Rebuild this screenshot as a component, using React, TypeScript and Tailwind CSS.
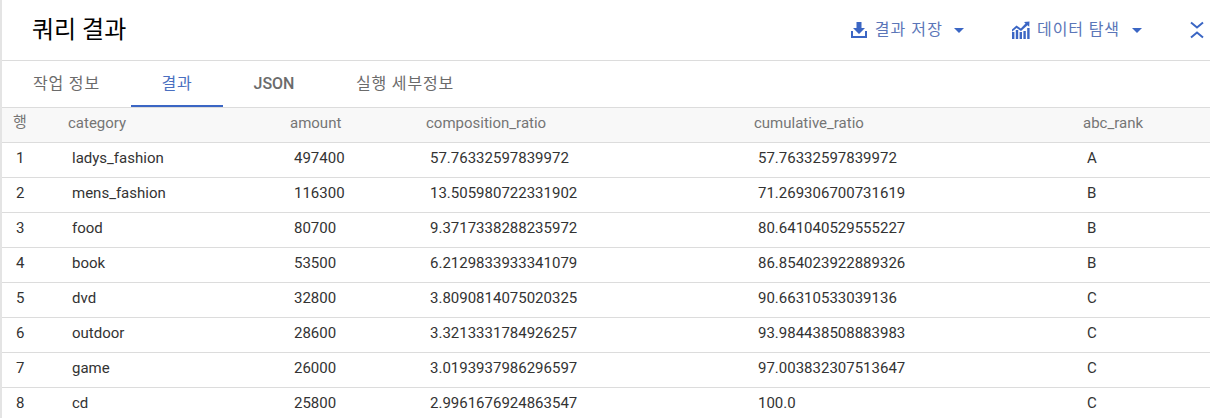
const rows = [
  ["1", "ladys_fashion", "497400", "57.76332597839972", "57.76332597839972", "A"],
  ["2", "mens_fashion", "116300", "13.505980722331902", "71.269306700731619", "B"],
  ["3", "food", "80700", "9.3717338288235972", "80.641040529555227", "B"],
  ["4", "book", "53500", "6.2129833933341079", "86.854023922889326", "B"],
  ["5", "dvd", "32800", "3.8090814075020325", "90.66310533039136", "C"],
  ["6", "outdoor", "28600", "3.3213331784926257", "93.984438508883983", "C"],
  ["7", "game", "26000", "3.0193937986296597", "97.003832307513647", "C"],
  ["8", "cd", "25800", "2.9961676924863547", "100.0", "C"],
];

const gridCols = "grid grid-cols-[66px_222px_136px_328px_329px_1fr]";
const font = "font-['Roboto','Noto_Sans_CJK_KR',sans-serif]";

function SaveIcon() {
  return (
    <svg width="16" height="16" viewBox="0 0 16 16" fill="#3b66c4">
      <path d="M5.5 0h5v6h3.5L8 12 2 6h3.5z" />
      <path d="M0 9h2v5h12V9h2v7H0z" />
    </svg>
  );
}

function ExploreIcon() {
  return (
    <svg width="18" height="18" viewBox="0 0 18 18" fill="#3b66c4">
      <rect x="0" y="11" width="2.4" height="7" />
      <rect x="3.8" y="9" width="2.4" height="9" />
      <rect x="7.6" y="11" width="2.4" height="7" />
      <rect x="11.4" y="10" width="2.4" height="8" />
      <rect x="15.2" y="7" width="2.4" height="11" />
      <path d="M0 8.5 4.5 4.5 8.8 7.5 13.5 2.5 12 1 17.5 0.5 17.2 5.8 15.5 4.2 9 10 4.6 6.9 0 10.8Z" />
    </svg>
  );
}

function CollapseIcon() {
  return (
    <svg width="14" height="18" viewBox="0 0 14 18" fill="none" stroke="#3b66c4" strokeWidth="2">
      <path d="M1 1.5 7 6.5 13 1.5" />
      <path d="M1 16.5 7 11.5 13 16.5" />
    </svg>
  );
}

function Caret() {
  return <span className="h-0 w-0 border-x-[5.5px] border-t-[5px] border-x-transparent border-t-[#3b66c4]" />;
}

export default function App() {
  return (
    <div className={`h-[418px] w-[1210px] overflow-hidden border-l-2 border-[#e4e4e4] bg-white ${font}`}>
      <div className="flex h-[61px] items-center border-b border-[#dcdcdc] pr-[6px] pl-[30px]">
        <h1 className="text-[24px] leading-none text-black">쿼리 결과</h1>
        <button className="ml-auto flex items-center text-[16px] tracking-[1.1px] text-[#5b76b8]">
          <span className="mr-[8px] flex"><SaveIcon /></span>
          결과 저장
          <span className="ml-[11px] flex"><Caret /></span>
        </button>
        <button className="ml-[48px] flex items-center text-[16px] tracking-[0.9px] text-[#5b76b8]">
          <span className="mr-[7px] flex"><ExploreIcon /></span>
          데이터 탐색
          <span className="ml-[12px] flex"><Caret /></span>
        </button>
        <button className="ml-[48px] flex">
          <CollapseIcon />
        </button>
      </div>

      <div className="flex h-[47px] items-stretch border-b border-[#dcdcdc] text-[16px] text-[#6b6b6b]">
        <div className="flex w-[129px] items-center justify-center pb-[1px] tracking-[0.8px]">작업 정보</div>
        <div className="flex w-[92px] items-center justify-center border-b-2 border-[#3b66c4] pt-[2px] tracking-[0.8px] text-[#4a6fc0]">결과</div>
        <div className="flex w-[102px] items-center justify-center pb-[1px] font-medium">JSON</div>
        <div className="flex w-[160px] items-center justify-center pb-[1px] tracking-[0.8px]">실행 세부정보</div>
      </div>

      <div className={`${gridCols} h-[35px] items-center border-b border-[#dcdcdc] bg-[#f8f8f8] pb-[4px] text-[15px] text-[#757575]`}>
        <span className="pb-[2px] pl-[11px]">행</span>
        <span>category</span>
        <span>amount</span>
        <span>composition_ratio</span>
        <span>cumulative_ratio</span>
        <span>abc_rank</span>
      </div>

      {rows.map((row) => (
        <div key={row[0]} className={`${gridCols} h-[35px] items-center border-b border-[#dcdcdc] pb-[4px] text-[15px] text-[#333333]`}>
          <span className="pl-[14px]">{row[0]}</span>
          <span className="pl-[4px]">{row[1]}</span>
          <span className="pl-[4px]">{row[2]}</span>
          <span className="pl-[4px]">{row[3]}</span>
          <span className="pl-[4px]">{row[4]}</span>
          <span className="pl-[4px]">{row[5]}</span>
        </div>
      ))}
    </div>
  );
}
